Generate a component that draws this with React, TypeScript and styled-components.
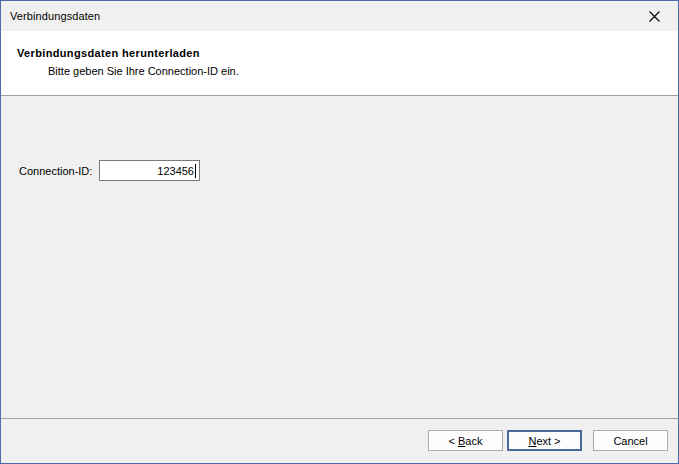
import React from 'react'
import styled, { createGlobalStyle } from 'styled-components'

const GlobalStyle = createGlobalStyle`
  html, body {
    margin: 0;
    padding: 0;
    background: #f0f0f0;
  }
  * { box-sizing: border-box; }
`

const Window = styled.div`
  width: 679px;
  height: 464px;
  border: 1px solid #4a6ea9;
  background: #f0f0f0;
  display: flex;
  flex-direction: column;
  font-family: 'Liberation Sans', Arial, sans-serif;
  font-size: 11px;
  color: #000;
  overflow: hidden;
`

const TitleBar = styled.div`
  height: 30px;
  flex: none;
  display: flex;
  align-items: center;
  justify-content: space-between;
  padding: 0 0 0 9px;
  background: #f0f0f0;
`

const TitleText = styled.span`
  font-family: 'Liberation Sans', 'Segoe UI', sans-serif;
  font-size: 11px;
  letter-spacing: 0.1px;
  color: #000;
`

const CloseButton = styled.div`
  width: 46px;
  height: 30px;
  display: flex;
  align-items: center;
  justify-content: center;
  margin-right: 1px;
`

const Header = styled.div`
  height: 65px;
  flex: none;
  background: #fff;
  border-bottom: 1px solid #a0a0a0;
  padding: 16px 0 0 16px;
`

const HeaderTitle = styled.div`
  font-weight: bold;
  font-size: 11px;
  letter-spacing: 0.35px;
  line-height: 13px;
`

const HeaderSub = styled.div`
  margin: 5px 0 0 31px;
  line-height: 13px;
`

const Body = styled.div`
  flex: 1;
  padding: 64px 0 0 18px;
  border-bottom: 1px solid #a0a0a0;
`

const FieldRow = styled.div`
  display: flex;
  align-items: center;
  gap: 6px;
`

const Label = styled.label`
  width: 74px;
`

const TextBox = styled.div`
  width: 101px;
  height: 21px;
  border: 1px solid #7a7a7a;
  background: #fff;
  display: flex;
  align-items: center;
  justify-content: flex-end;
  padding-right: 3px;
`

const Caret = styled.span`
  display: inline-block;
  width: 1px;
  height: 14px;
  background: #000;
  margin-left: 1px;
`

const Footer = styled.div`
  height: 44px;
  flex: none;
  display: flex;
  justify-content: flex-end;
  align-items: flex-start;
  padding: 11px 10px 0 0;
`

const Button = styled.button<{ $primary?: boolean; $gap?: number }>`
  width: 75px;
  height: 21px;
  margin-left: ${p => p.$gap ?? 0}px;
  background: #fdfdfd;
  border: ${p => (p.$primary ? '2px solid #4a6a9c' : '1px solid #adadad')};
  font-family: 'Liberation Sans', Arial, sans-serif;
  font-size: 11px;
  color: #000;
  padding: 0;
  u { text-decoration: underline; }
`

export default function App() {
  return (
    <>
      <GlobalStyle />
      <Window>
        <TitleBar>
          <TitleText>Verbindungsdaten</TitleText>
          <CloseButton>
            <svg width="11" height="11" viewBox="0 0 11 11">
              <path d="M0.5 0.5 L10.5 10.5 M10.5 0.5 L0.5 10.5" stroke="#000" strokeWidth="1.1" />
            </svg>
          </CloseButton>
        </TitleBar>
        <Header>
          <HeaderTitle>Verbindungsdaten herunterladen</HeaderTitle>
          <HeaderSub>Bitte geben Sie Ihre Connection-ID ein.</HeaderSub>
        </Header>
        <Body>
          <FieldRow>
            <Label>Connection-ID:</Label>
            <TextBox>
              123456<Caret />
            </TextBox>
          </FieldRow>
        </Body>
        <Footer>
          <Button>&lt; <u>B</u>ack</Button>
          <Button $primary $gap={4}><u>N</u>ext &gt;</Button>
          <Button $gap={11}>Cancel</Button>
        </Footer>
      </Window>
    </>
  )
}
